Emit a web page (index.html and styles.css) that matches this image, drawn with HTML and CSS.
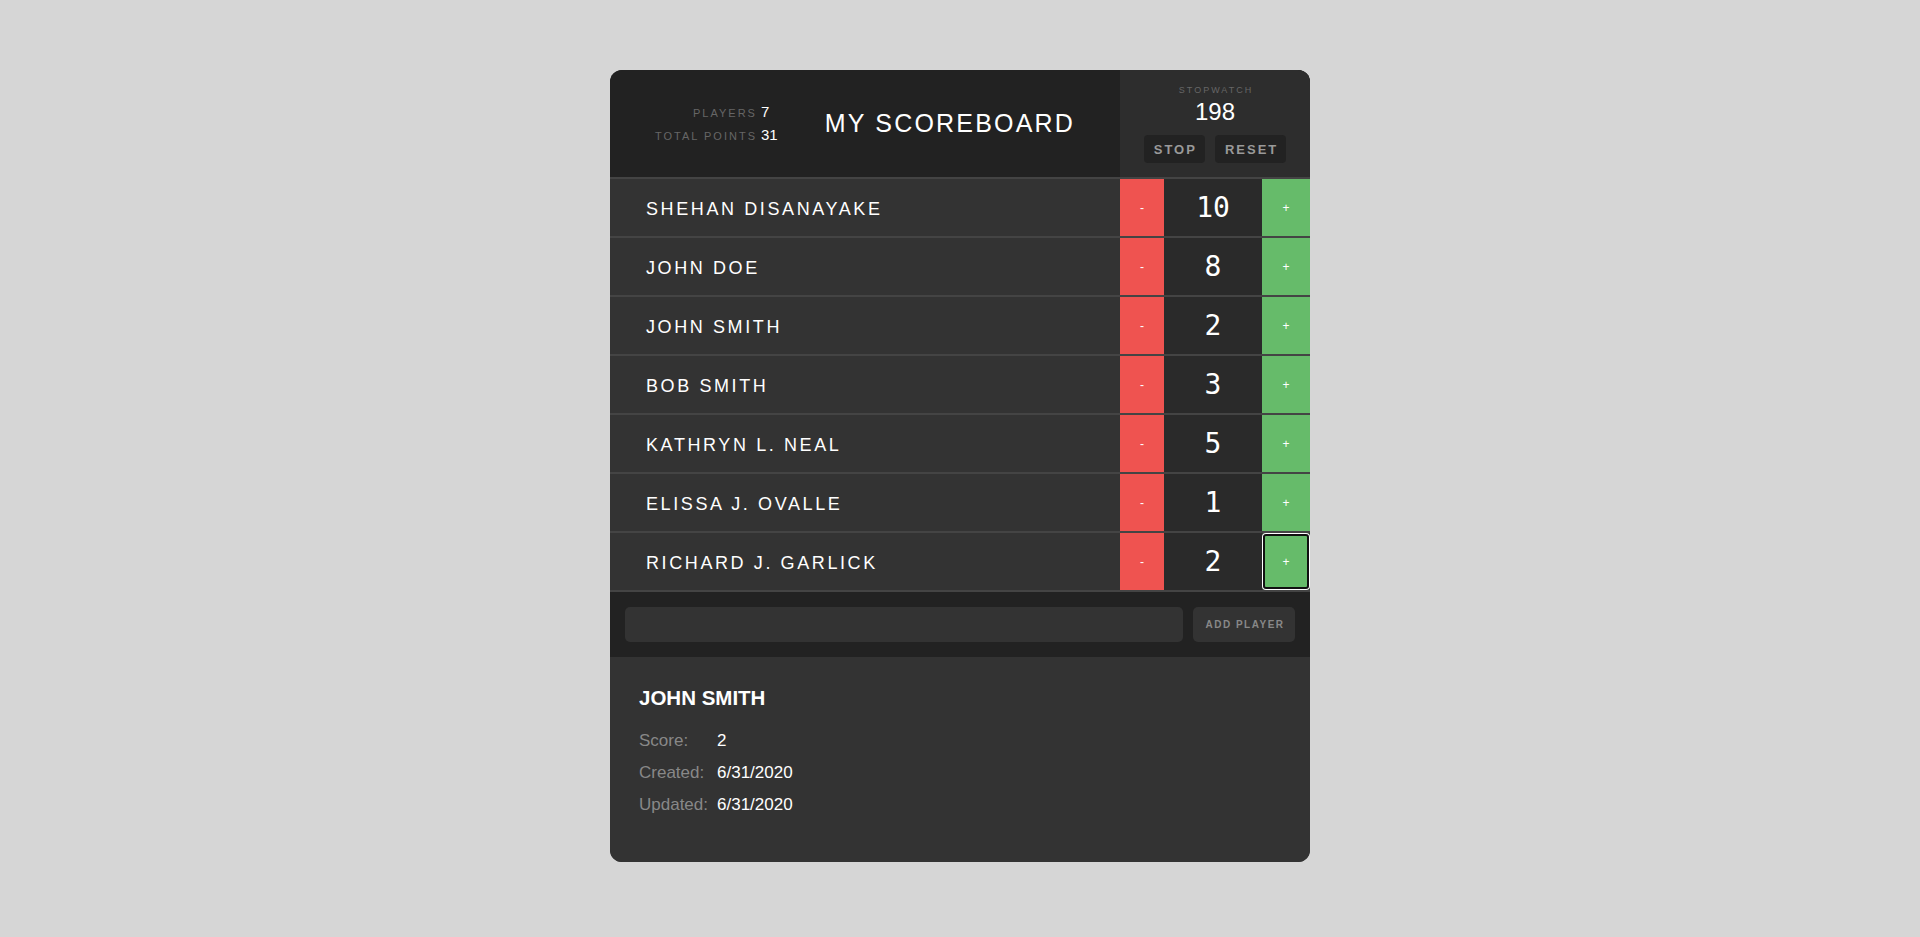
FILE: index.html
```html
<!DOCTYPE html>
<html lang="en">
<head>
<meta charset="utf-8">
<title>My Scoreboard</title>
<link rel="stylesheet" href="styles.css">
</head>
<body>
<div class="scoreboard">
  <header class="header">
    <div class="header-main">
      <div class="stats">
        <span class="stat-label">PLAYERS</span><span class="stat-value">7</span>
        <span class="stat-label">TOTAL POINTS</span><span class="stat-value">31</span>
      </div>
      <h1 class="title">MY SCOREBOARD</h1>
    </div>
    <div class="stopwatch">
      <div class="sw-label">STOPWATCH</div>
      <div class="sw-time">198</div>
      <div class="sw-buttons">
        <button class="sw-btn">STOP</button>
        <button class="sw-btn">RESET</button>
      </div>
    </div>
  </header>

  <div class="players">
    <div class="player"><span class="name">SHEHAN DISANAYAKE</span><button class="btn-minus">-</button><span class="score">10</span><button class="btn-plus">+</button></div>
    <div class="player"><span class="name">JOHN DOE</span><button class="btn-minus">-</button><span class="score">8</span><button class="btn-plus">+</button></div>
    <div class="player"><span class="name">JOHN SMITH</span><button class="btn-minus">-</button><span class="score">2</span><button class="btn-plus">+</button></div>
    <div class="player"><span class="name">BOB SMITH</span><button class="btn-minus">-</button><span class="score">3</span><button class="btn-plus">+</button></div>
    <div class="player"><span class="name">KATHRYN L. NEAL</span><button class="btn-minus">-</button><span class="score">5</span><button class="btn-plus">+</button></div>
    <div class="player"><span class="name">ELISSA J. OVALLE</span><button class="btn-minus">-</button><span class="score">1</span><button class="btn-plus">+</button></div>
    <div class="player"><span class="name">RICHARD J. GARLICK</span><button class="btn-minus">-</button><span class="score">2</span><button class="btn-plus is-focused">+</button></div>
  </div>

  <form class="add-form">
    <input class="add-input" type="text">
    <button class="add-btn" type="button">ADD PLAYER</button>
  </form>

  <section class="details">
    <h3 class="details-name">JOHN SMITH</h3>
    <div class="details-grid">
      <span class="d-label">Score:</span><span class="d-value">2</span>
      <span class="d-label">Created:</span><span class="d-value">6/31/2020</span>
      <span class="d-label">Updated:</span><span class="d-value">6/31/2020</span>
    </div>
  </section>
</div>
</body>
</html>
```

FILE: styles.css
```css
* { box-sizing: border-box; }

body {
  margin: 0;
  padding-top: 70px;
  background: #d6d6d6;
  font-family: "Liberation Sans", Arial, sans-serif;
  color: #fff;
}

button, input {
  font-family: "Liberation Sans", Arial, sans-serif;
  border: none;
  margin: 0;
}

.scoreboard {
  width: 700px;
  margin: 0 auto;
  background: #333;
  border-radius: 12px;
  overflow: hidden;
}

/* Header */
.header {
  display: flex;
  height: 109px;
  border-bottom: 2px solid #444;
  background: #222;
}

.header-main {
  flex: 1;
  display: flex;
  align-items: center;
  justify-content: center;
  gap: 47px;
}

.stats {
  display: grid;
  grid-template-columns: auto auto;
  column-gap: 4px;
  align-items: baseline;
  line-height: 22px;
}

.stat-label {
  text-align: right;
  font-size: 11px;
  letter-spacing: 2px;
  color: #666;
}

.stat-value {
  font-size: 15px;
  color: #fff;
}

.title {
  margin: 0;
  font-size: 25px;
  font-weight: normal;
  letter-spacing: 2.2px;
  color: #fff;
}

.stopwatch {
  width: 190px;
  background: #2d2d2d;
  display: flex;
  flex-direction: column;
  align-items: center;
  padding-top: 15px;
}

.sw-label {
  font-size: 9px;
  line-height: 11px;
  letter-spacing: 2px;
  padding-left: 2px;
  color: #666;
}

.sw-time {
  font-size: 24px;
  line-height: 26px;
  margin-top: 3px;
  color: #fff;
}

.sw-buttons {
  display: flex;
  gap: 10px;
  margin-top: 10px;
}

.sw-btn {
  height: 28px;
  padding: 0 8px 0 10px;
  background: #222;
  color: #999;
  font-size: 13px;
  font-weight: bold;
  letter-spacing: 2px;
  border-radius: 4px;
}

/* Players */
.player {
  display: flex;
  height: 59px;
  border-bottom: 2px solid #444;
  background: #333;
}

.name {
  flex: 1;
  display: flex;
  align-items: center;
  padding-left: 36px;
  padding-top: 4px;
  font-size: 18px;
  letter-spacing: 2.6px;
  color: #fff;
}

.btn-minus, .btn-plus {
  color: #fff;
  font-size: 12px;
  padding: 0;
}

.btn-minus {
  width: 44px;
  background: #ef5350;
}

.btn-plus {
  width: 48px;
  background: #66bb6a;
}

.btn-plus.is-focused {
  border-radius: 4px;
  box-shadow: inset 0 0 0 1px #fff, inset 0 0 0 3px #111;
  background: #66bb6a;
}

.score {
  width: 98px;
  display: flex;
  align-items: center;
  justify-content: center;
  background: #2a2a2a;
  font-family: "DejaVu Sans Mono", "Liberation Mono", monospace;
  font-size: 28px;
  color: #fff;
}

/* Add form */
.add-form {
  display: flex;
  gap: 10px;
  padding: 15px;
  margin: 0;
  background: #222;
}

.add-input {
  flex: 1;
  height: 35px;
  background: #333;
  border-radius: 5px;
  color: #fff;
  font-size: 16px;
  padding: 0 10px;
  outline: none;
}

.add-btn {
  width: 102px;
  height: 35px;
  background: #333;
  border-radius: 5px;
  color: #888;
  font-size: 10px;
  font-weight: bold;
  letter-spacing: 1.5px;
  padding: 0 0 0 2px;
}

/* Details */
.details {
  padding: 29px 29px 41px;
  background: #333;
}

.details-name {
  margin: 0 0 15px;
  font-size: 20.5px;
  line-height: 24px;
  font-weight: bold;
  color: #fff;
}

.details-grid {
  display: grid;
  grid-template-columns: 71px auto;
  column-gap: 7px;
  justify-content: start;
  font-size: 17px;
  line-height: 32px;
}

.d-label {
  color: #888;
}

.d-value {
  color: #fff;
}
```
